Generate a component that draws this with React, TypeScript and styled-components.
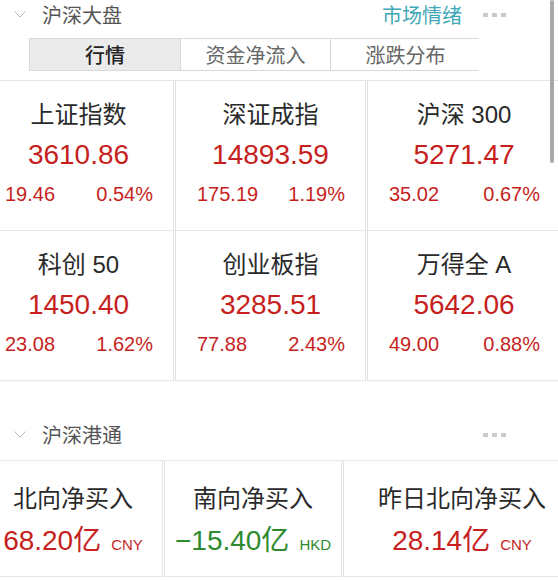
import React from "react";
import styled, { createGlobalStyle } from "styled-components";

const Global = createGlobalStyle`
  html, body { margin: 0; padding: 0; background: #fff; overflow: hidden; }
  body { font-family: "Liberation Sans", "Noto Sans CJK SC", sans-serif; }
`;

const RED = "#c61f1d";
const GREEN = "#2e8a30";

const Page = styled.div`
  position: relative;
  margin-left: -16px;
  width: 576px;
`;

const Header = styled.div<{ $h: number; $mt?: number; $border?: boolean }>`
  display: flex;
  align-items: center;
  height: ${(p) => p.$h}px;
  margin-top: ${(p) => p.$mt ?? 0}px;
  padding: 0 54px 0 30px;
  border-bottom: ${(p) => (p.$border ? "1px solid #e8e8e8" : "none")};
`;

const Chevron = styled.svg`
  width: 12px;
  height: 7px;
  flex: none;
`;

const Title = styled.div`
  margin-left: 16px;
  font-family: "Noto Sans CJK SC", sans-serif;
  font-size: 20px;
  line-height: 29px;
  color: #555;
  flex: 1;
`;

const Link = styled.div`
  font-family: "Noto Sans CJK SC", sans-serif;
  font-size: 20px;
  line-height: 29px;
  color: #3ea8b6;
  margin-right: 21px;
`;

const Dots = styled.div`
  display: flex;
  gap: 4px;
  span {
    width: 5px;
    height: 4px;
    background: #cacaca;
  }
`;

const Tabs = styled.div`
  display: grid;
  grid-template-columns: repeat(3, 150px);
  margin: 9px 0 0 45px;
  height: 33px;
  border: 1px solid #d9d9d9;
  box-sizing: border-box;
  width: 450px;
`;

const Tab = styled.div<{ $active?: boolean }>`
  display: flex;
  align-items: center;
  justify-content: center;
  font-family: "Noto Sans CJK SC", sans-serif;
  font-size: 20px;
  color: ${(p) => (p.$active ? "#222" : "#666")};
  font-weight: ${(p) => (p.$active ? 500 : 400)};
  background: ${(p) => (p.$active ? "#ebebeb" : "#fff")};
  border-left: ${(p) => (p.$active ? "none" : "1px solid #d9d9d9")};
`;

const Spacer = styled.div<{ $h: number }>`
  height: ${(p) => p.$h}px;
`;

const Grid = styled.div<{ $cols: string; $w: number; $top?: boolean }>`
  display: grid;
  grid-template-columns: ${(p) => p.$cols};
  width: ${(p) => p.$w}px;
  border-top: ${(p) => (p.$top ? "1px solid #e6e6e6" : "none")};
`;

const Cell = styled.div<{ $h: number; $pt: number; $last?: boolean }>`
  height: ${(p) => p.$h}px;
  padding-top: ${(p) => p.$pt}px;
  box-sizing: border-box;
  display: flex;
  flex-direction: column;
  align-items: center;
  border-bottom: 1px solid #e6e6e6;
  border-right: ${(p) => (p.$last ? "none" : "3px double #e2e2e2")};
  min-width: 0;
`;

const Name = styled.div`
  font-family: "Liberation Sans", "Noto Sans CJK SC", sans-serif;
  font-size: 24px;
  line-height: 30px;
  color: #2a2a2a;
  white-space: nowrap;
`;

const Value = styled.div<{ $color: string; $mt: number }>`
  margin-top: ${(p) => p.$mt}px;
  font-size: 28px;
  line-height: 36px;
  color: ${(p) => p.$color};
  white-space: nowrap;
  display: flex;
  align-items: baseline;
`;

const Unit = styled.span`
  font-size: 15px;
  margin-left: 10px;
`;

const Change = styled.div`
  margin-top: 9px;
  align-self: stretch;
  display: flex;
  justify-content: space-between;
  padding: 0 20px 0 21px;
  font-size: 20px;
  line-height: 24px;
  color: ${RED};
`;

const Scrollbar = styled.div`
  position: absolute;
  left: 566px;
  top: 0;
  width: 4px;
  height: 163px;
  border-radius: 2px;
  background: #a8a8a8;
`;

const indices = [
  { name: "上证指数", value: "3610.86", chg: "19.46", pct: "0.54%" },
  { name: "深证成指", value: "14893.59", chg: "175.19", pct: "1.19%" },
  { name: "沪深 300", value: "5271.47", chg: "35.02", pct: "0.67%" },
  { name: "科创 50", value: "1450.40", chg: "23.08", pct: "1.62%" },
  { name: "创业板指", value: "3285.51", chg: "77.88", pct: "2.43%" },
  { name: "万得全 A", value: "5642.06", chg: "49.00", pct: "0.88%" },
];

const flows = [
  { name: "北向净买入", value: "68.20亿", unit: "CNY", color: RED },
  { name: "南向净买入", value: "−15.40亿", unit: "HKD", color: GREEN },
  { name: "昨日北向净买入", value: "28.14亿", unit: "CNY", color: RED },
];

const ChevronIcon = () => (
  <Chevron viewBox="0 0 12 7">
    <polyline points="0.5,0.5 6,6 11.5,0.5" fill="none" stroke="#b4b4b4" strokeWidth="1" />
  </Chevron>
);

const MoreDots = () => (
  <Dots>
    <span />
    <span />
    <span />
  </Dots>
);

export default function App() {
  return (
    <>
      <Global />
      <Page>
        <Header $h={29}>
          <ChevronIcon />
          <Title>沪深大盘</Title>
          <Link>市场情绪</Link>
          <MoreDots />
        </Header>
        <Tabs>
          <Tab $active>行情</Tab>
          <Tab>资金净流入</Tab>
          <Tab>涨跌分布</Tab>
        </Tabs>
        <Spacer $h={9} />
        <Grid $cols="repeat(3, 1fr)" $w={576} $top>
          {indices.map((d, i) => (
            <Cell key={d.name} $h={150} $pt={19} $last={i % 3 === 2}>
              <Name>{d.name}</Name>
              <Value $color={RED} $mt={7}>{d.value}</Value>
              <Change>
                <span>{d.chg}</span>
                <span>{d.pct}</span>
              </Change>
            </Cell>
          ))}
        </Grid>
        <Header $h={51} $mt={28} $border>
          <ChevronIcon />
          <Title>沪深港通</Title>
          <MoreDots />
        </Header>
        <Grid $cols="181px 179px 1fr" $w={596}>
          {flows.map((d, i) => (
            <Cell key={d.name} $h={116} $pt={23} $last={i === 2}>
              <Name>{d.name}</Name>
              <Value $color={d.color} $mt={9}>
                {d.value}
                <Unit>{d.unit}</Unit>
              </Value>
            </Cell>
          ))}
        </Grid>
        <Scrollbar />
      </Page>
    </>
  );
}
